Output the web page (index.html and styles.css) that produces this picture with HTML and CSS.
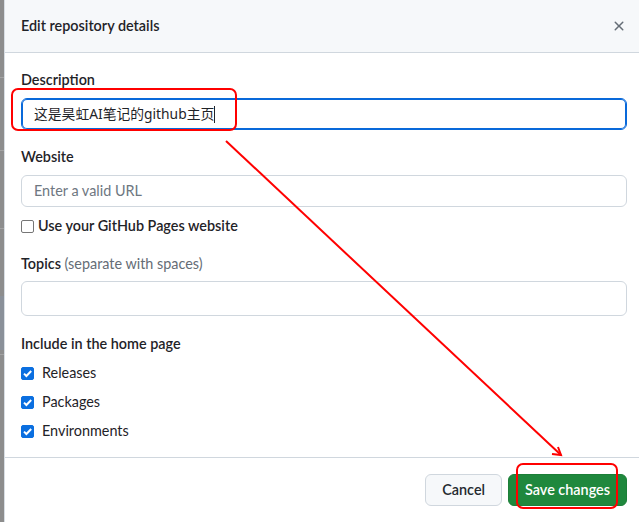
FILE: index.html
```html
<!DOCTYPE html>
<html lang="en">
<head>
<meta charset="utf-8">
<title>Edit repository details</title>
<link rel="stylesheet" href="styles.css">
</head>
<body>
<div class="page">
  <div class="backdrop">
    <span class="bd-line l1"></span>
    <span class="bd-line l2"></span>
    <span class="bd-line l3"></span>
    <span class="bd-line l4"></span>
    <span class="bd-block"></span>
  </div>
  <div class="dialog">
    <div class="dialog-header">
      <h1 class="dialog-title">Edit repository details</h1>
      <button class="close-btn" aria-label="Close">
        <svg width="16" height="16" viewBox="0 0 16 16"><path fill="currentColor" d="M3.72 3.72a.75.75 0 0 1 1.06 0L8 6.94l3.22-3.220a.749.749 0 0 1 1.275.326.749.749 0 0 1-.215.734L9.06 8l3.22 3.22a.749.749 0 0 1-.326 1.275.749.749 0 0 1-.734-.215L8 9.060l-3.22 3.22a.751.751 0 0 1-1.042-.018.751.751 0 0 1-.018-1.042L6.94 8 3.72 4.78a.75.75 0 0 1 0-1.06Z"/></svg>
      </button>
    </div>
    <div class="dialog-body">
      <div class="field first">
        <label class="label">Description</label>
        <div class="input focused"><span class="value">这是昊虹AI笔记的github主页</span><span class="caret"></span></div>
      </div>
      <div class="field">
        <label class="label">Website</label>
        <div class="input"><span class="placeholder">Enter a valid URL</span></div>
      </div>
      <label class="check-row strong">
        <span class="box"></span>Use your GitHub Pages website
      </label>
      <div class="field topics">
        <label class="label">Topics <span class="hint">(separate with spaces)</span></label>
        <div class="input tall"></div>
      </div>
      <div class="group">
        <div class="label">Include in the home page</div>
        <label class="check-row"><span class="box checked"><svg viewBox="0 0 13 13" width="13" height="13"><path d="M3 6.6l2.4 2.4L10.2 4" fill="none" stroke="#fff" stroke-width="2"/></svg></span><span class="check-text">Releases</span></label>
        <label class="check-row"><span class="box checked"><svg viewBox="0 0 13 13" width="13" height="13"><path d="M3 6.6l2.4 2.4L10.2 4" fill="none" stroke="#fff" stroke-width="2"/></svg></span><span class="check-text">Packages</span></label>
        <label class="check-row"><span class="box checked"><svg viewBox="0 0 13 13" width="13" height="13"><path d="M3 6.6l2.4 2.4L10.2 4" fill="none" stroke="#fff" stroke-width="2"/></svg></span><span class="check-text">Environments</span></label>
      </div>
    </div>
    <div class="dialog-footer">
      <button class="btn">Cancel</button>
      <button class="btn primary">Save changes</button>
    </div>
  </div>
</div>
<svg class="annotations" width="639" height="522" viewBox="0 0 639 522">
  <rect x="12" y="89" width="224" height="41" rx="6" fill="none" stroke="#ff0000" stroke-width="2"/>
  <rect x="517" y="464" width="100" height="44" rx="6" fill="none" stroke="#ff0000" stroke-width="2"/>
  <path d="M226 141 L561 455" fill="none" stroke="#ff0000" stroke-width="2"/>
  <path d="M552 454 L561 455 L558 447" fill="none" stroke="#ff0000" stroke-width="2"/>
</svg>
</body>
</html>
```
FILE: styles.css
```css
* { box-sizing: border-box; }
html, body { margin: 0; padding: 0; }
body {
  width: 639px;
  height: 522px;
  overflow: hidden;
  background: #8f8f8f;
  font-family: "Lato", "Noto Sans CJK SC", sans-serif;
  font-size: 14.4px;
  color: #1f2328;
  position: relative;
}
.page {
  display: flex;
  height: 522px;
}
.backdrop {
  width: 4px;
  flex: none;
  background: #8d8d8d;
  position: relative;
}
.bd-line { position: absolute; left: 0; width: 4px; height: 1px; background: #a3a3a3; }
.l1 { top: 77px; }
.l2 { top: 150px; }
.l3 { top: 228px; }
.l4 { top: 354px; }
.bd-block { position: absolute; left: 0; top: 296px; width: 4px; height: 54px; background: #8a9099; }
.dialog {
  flex: 1;
  background: #fff;
  border-left: 1px solid #d8dee4;
  display: flex;
  flex-direction: column;
}
.dialog-header {
  height: 53px;
  background: #f6f8fa;
  border-bottom: 1px solid #d0d7de;
  display: flex;
  align-items: center;
  justify-content: space-between;
  padding: 0 12px 0 16px;
}
.dialog-title {
  margin: 0;
  font-size: 14.4px;
  font-weight: 600;
  line-height: 20px;
}
.close-btn {
  border: 0;
  background: none;
  padding: 0;
  width: 16px;
  height: 16px;
  color: #656d76;
  display: flex;
}
.dialog-body {
  padding: 17px 12px 16px 16px;
  display: flex;
  flex-direction: column;
}
.field { display: flex; flex-direction: column; }
.field + .field { margin-top: 17px; }
.label {
  display: block;
  font-weight: 600;
  line-height: 20px;
  margin-bottom: 8px;
}
.hint { font-weight: 400; color: #656d76; }
.input {
  height: 32px;
  border: 1px solid #d0d7de;
  border-radius: 6px;
  background: #fff;
  padding: 0 12px;
  display: flex;
  align-items: center;
  line-height: 20px;
}
.input.focused {
  border-color: #0969da;
  box-shadow: inset 0 0 0 1px #0969da;
}
.value {
  font-family: "Noto Sans", "Noto Sans CJK SC", sans-serif;
  font-size: 13.8px;
}
.caret {
  width: 1px;
  height: 17px;
  background: #1f2328;
  margin-left: 0;
}
.placeholder { color: #6e7781; }
.check-row {
  display: flex;
  align-items: center;
  line-height: 20px;
  height: 20px;
  margin-top: 9px;
}
.check-row.strong { font-weight: 600; }
.box {
  width: 13px;
  height: 13px;
  border: 1px solid #767676;
  border-radius: 2px;
  background: #fff;
  margin-right: 4px;
  flex: none;
  display: flex;
}
.box.checked {
  background: #0b6fe0;
  border-color: #0b6fe0;
  margin-right: 8px;
}
.box.checked svg { margin: -1px; }
.topics { margin-top: 18px; }
.topics .label { margin-bottom: 7px; }
.input.tall { height: 35px; }
.group { margin-top: 18px; display: flex; flex-direction: column; }
.group .label { margin-bottom: 0; }
.dialog-footer {
  border-top: 1px solid #d0d7de;
  padding: 16px 12px 16px 16px;
  display: flex;
  justify-content: flex-end;
  gap: 6px;
}
.btn {
  height: 32px;
  padding: 0 16px;
  border: 1px solid #d0d7de;
  border-radius: 6px;
  background: #f6f8fa;
  color: #24292f;
  font-family: inherit;
  font-size: 14.4px;
  font-weight: 600;
  line-height: 20px;
}
.btn.primary {
  background: #1f883d;
  border-color: #1c7f38;
  color: #fff;
}
.annotations {
  position: absolute;
  left: 0;
  top: 0;
  pointer-events: none;
}
```
